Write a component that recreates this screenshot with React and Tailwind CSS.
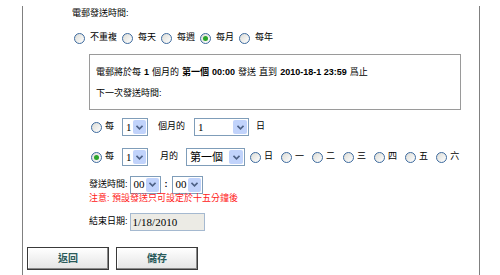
const cjk = { fontFamily: '"Liberation Sans", "Noto Sans CJK TC", sans-serif' }
const serif = { fontFamily: '"Liberation Serif", "Noto Sans CJK TC", serif' }

function Radio({ checked }) {
  return (
    <span className="inline-flex h-[11px] w-[11px] shrink-0 items-center justify-center rounded-full border border-[#3d6a9e] bg-gradient-to-br from-[#dcdcd6] to-white">
      {checked && <span className="h-[5px] w-[5px] rounded-full bg-[#2aa52a]" />}
    </span>
  )
}

function Select({ value, width }) {
  return (
    <div
      className="flex h-[18px] shrink-0 items-stretch border border-[#7f9db9] bg-white"
      style={{ width }}
    >
      <span className="flex flex-1 items-center pl-[3px] text-[11px] text-black" style={serif}>
        {value}
      </span>
      <span className="m-px flex w-[14px] items-center justify-center rounded-[2px] bg-[#c1d3fb]">
        <svg width="7" height="5" viewBox="0 0 7 5">
          <path d="M0.5 0.8 L3.5 3.8 L6.5 0.8" fill="none" stroke="#4d6185" strokeWidth="1.6" />
        </svg>
      </span>
    </div>
  )
}

function Opt({ checked, label, gap = 'gap-[5px]' }) {
  return (
    <span className={`flex shrink-0 items-center ${gap}`}>
      <Radio checked={checked} />
      <span>{label}</span>
    </span>
  )
}

function Button({ children }) {
  return (
    <button className="flex h-[23px] w-[82px] items-center justify-center border border-[#3a3a3a] bg-gradient-to-b from-white to-[#e4e4e4] text-[10px] font-bold text-[#2b5b5b] shadow-[inset_-1px_-1px_0_#8a8a8a,inset_1px_1px_0_#ffffff]">
      {children}
    </button>
  )
}

export default function App() {
  const days = ['一', '二', '三', '四', '五', '六']

  return (
    <div className="h-[275px] w-[500px] whitespace-nowrap bg-white text-[9px] text-black" style={cjk}>
      <div className="ml-[22px] h-[273px] w-[458px] border-r border-b border-l border-r-[#808080] border-b-[#bdbdbd] border-l-[#808080]">
        <div className="ml-[49px] mt-[6px] flex h-[16px] items-center">電郵發送時間:</div>

        <div className="ml-[51px] mt-[8px] flex h-[16px] items-center gap-[5px]">
          <Opt label="不重複" />
          <Opt label="每天" />
          <Opt label="每週" />
          <Opt checked label="每月" />
          <Opt label="每年" />
        </div>

        <div className="ml-[66px] mt-[8px] h-[56px] w-[372px] border border-[#9a9a9a] pl-[6px] pt-[12px]">
          <div className="flex h-[12px] items-center gap-[3px]">
            <span>電郵將於每</span>
            <b>1</b>
            <span>個月的</span>
            <b>第一個</b>
            <b>00:00</b>
            <span>發送</span>
            <span>直到</span>
            <b>2010-18-1 23:59</b>
            <span>爲止</span>
          </div>
          <div className="mt-[9px] flex h-[12px] items-center">下一次發送時間:</div>
        </div>

        <div className="ml-[68px] mt-[7px] flex h-[20px] items-center">
          <Radio />
          <span className="ml-[3px]">每</span>
          <span className="ml-[8px]"><Select value="1" width={26} /></span>
          <span className="ml-[10px]">個月的</span>
          <span className="ml-[9px]"><Select value="1" width={55} /></span>
          <span className="ml-[7px]">日</span>
        </div>

        <div className="ml-[68px] mt-[10px] flex h-[20px] items-center">
          <Radio checked />
          <span className="ml-[3px]">每</span>
          <span className="ml-[8px]"><Select value="1" width={26} /></span>
          <span className="ml-[12px]">月的</span>
          <span className="ml-[8px]"><Select value="第一個" width={59} /></span>
          <span className="ml-[5px] flex items-center gap-[8px]">
            <Opt label="日" gap="gap-[3px]" />
            {days.map((d) => (
              <Opt key={d} label={d} gap="gap-[3px]" />
            ))}
          </span>
        </div>

        <div className="ml-[66px] mt-[9px] flex h-[17px] items-center">
          <span>發送時間:</span>
          <span className="ml-[2px]"><Select value="00" width={31} /></span>
          <span className="ml-[4px] font-bold">:</span>
          <span className="ml-[4px]"><Select value="00" width={31} /></span>
        </div>
        <div className="ml-[66px] flex h-[12px] items-center text-[#ff2020]">注意: 預設發送只可設定於十五分鐘後</div>

        <div className="ml-[66px] mt-[8px] flex h-[18px] items-center">
          <span>結束日期:</span>
          <span
            className="ml-[2px] flex h-[18px] w-[75px] items-center border border-[#a5b9d0] bg-[#ecebe5] pl-[2px] text-[11px]"
            style={serif}
          >
            1/18/2010
          </span>
        </div>

        <div className="ml-[4px] mt-[16px] flex gap-[7px]">
          <Button>返回</Button>
          <Button>儲存</Button>
        </div>
      </div>
    </div>
  )
}
